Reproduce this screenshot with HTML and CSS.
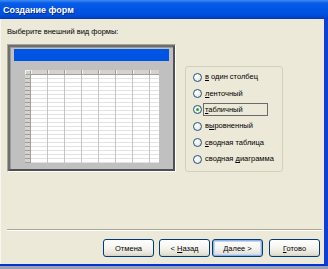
FILE: index.html
```html
<!DOCTYPE html>
<html>
<head>
<meta charset="utf-8">
<link rel="stylesheet" href="styles.css">
</head>
<body>
<div class="window">
  <div class="titlebar">Создание форм</div>
  <div class="frame">
    <div class="content">
      <div class="label">Выберите внешний вид формы:</div>
      <div class="row">
        <div class="preview">
          <div class="preview-inner">
            <div class="pbar"></div>
            <div class="grid">
              <div class="corner"></div>
              <div class="colheads"></div>
              <div class="rowheads"></div>
              <div class="cells"></div>
            </div>
          </div>
        </div>
        <div class="group">
          <div class="opt"><span class="radio"></span><span class="txt"><u>в</u> один столбец</span></div>
          <div class="opt"><span class="radio"></span><span class="txt"><u>л</u>енточный</span></div>
          <div class="opt"><span class="radio checked"></span><span class="txt focus"><u>т</u>абличный</span></div>
          <div class="opt"><span class="radio"></span><span class="txt">в<u>ы</u>ровненный</span></div>
          <div class="opt"><span class="radio"></span><span class="txt"><u>с</u>водная таблица</span></div>
          <div class="opt"><span class="radio"></span><span class="txt">сводная <u>д</u>иаграмма</span></div>
        </div>
      </div>
      <div class="sep"></div>
      <div class="buttons">
        <button class="btn">Отмена</button>
        <button class="btn b-back">&lt; <u>Н</u>азад</button>
        <button class="btn b-next"><u>Д</u>алее &gt;</button>
        <button class="btn b-done"><u>Г</u>отово</button>
      </div>
    </div>
  </div>
  <div class="bottom"></div>
</div>
</body>
</html>
```
FILE: styles.css
```css
* { box-sizing: border-box; }
html, body { margin: 0; padding: 0; }
body { width: 328px; height: 269px; overflow: hidden; background: #9aa0b4; font-family: "Liberation Sans", Arial, sans-serif; }
.window { width: 328px; height: 269px; display: flex; flex-direction: column; }
.titlebar {
  height: 19px; flex: none;
  background: linear-gradient(to bottom, #3f8cf3 0, #0a5ce6 3px, #0055e5 9px, #0052de 14px, #0044cf 17px, #003bbd 19px);
  color: #fff; font-weight: bold; font-size: 9px; line-height: 20px; padding-left: 3px;
  text-shadow: 1px 1px 0 #0a2a8a; transform-origin: left center;
}
.frame { flex: none; height: 247px; display: flex; border-right: 4px solid #0b3fd6; border-bottom: 2px solid #0234d0; }
.content { flex: 1; background: #ece9d8; border-left: 1px solid #f6f5ef; padding-left: 6px; display: flex; flex-direction: column; }
.label { font-size: 7.5px; line-height: 11px; margin-top: 7px; color: #000; height: 11px; }
.row { display: flex; margin-top: 7px; }
.preview {
  width: 169px; height: 128px; flex: none;
  border: 1px solid #a9a595; border-right-color: #fff; border-bottom-color: #fff;
  padding: 0;
}
.preview-inner {
  width: 100%; height: 100%;
  border: 2px solid #6e6e6e; border-right-color: #505050; border-bottom-color: #505050;
  background: #c0c0c0; padding: 2px 4px 0 4px;
  box-shadow: inset 1px 1px 0 #9a9a9a;
}
.pbar { height: 12px; width: 155px; background: #0054e3; }
.grid {
  margin: 9px 0 0 11px; display: grid;
  grid-template-columns: 6px 128px; grid-template-rows: 5px 88px;
}
.corner { background: #d4d0c8; border: 1px solid #f2f2f2; border-right-color: #a0a0a0; border-bottom-color: #a0a0a0; }
.colheads {
  background:
    repeating-linear-gradient(to right, #f4f4f4 0 1px, #d6d3cc 1px 16px, #9c9c9c 16px 17px);
  border-bottom: 1px solid #a0a0a0;
}
.rowheads {
  background: repeating-linear-gradient(to bottom, #d6d3cc 0 3px, #9c9c9c 3px 4px);
  border-right: 1px solid #a0a0a0;
}
.cells {
  background:
    repeating-linear-gradient(to right, transparent 0 16px, #c4c4c4 16px 17px),
    repeating-linear-gradient(to bottom, #ffffff 0 3px, #e2e2e2 3px 4px);
}
.group {
  margin-left: 9px; margin-top: 22px; width: 98px; height: 106px; flex: none;
  border: 1px solid #d0d0bf; border-radius: 3px;
  padding: 2px 0 0 7px;
}
.opt { height: 16.4px; display: flex; align-items: center; font-size: 7.5px; }
.radio {
  width: 9px; height: 9px; border-radius: 50%; flex: none;
  border: 1px solid #1d5281;
  background: radial-gradient(circle at 35% 35%, #ffffff 0, #f3f3ef 40%, #dcdad2 100%);
  position: relative; margin-right: 1px;
}
.radio.checked::after {
  content: ""; position: absolute; left: 2px; top: 2px; width: 3px; height: 3px; border-radius: 50%;
  background: #2fa82f;
}
.txt { line-height: 10px; padding: 0 1px; border: 1px solid transparent; white-space: nowrap; }
.txt.focus { border-color: #6b6b6b; width: 65px; height: 13px; line-height: 11px; }
u { text-decoration: underline; text-underline-offset: 1px; }
.sep { margin-top: 57px; margin-right: 2px; height: 2px; border-top: 1px solid #aca899; border-bottom: 1px solid #fff; }
.buttons { display: flex; justify-content: flex-end; padding-right: 4px; margin-top: 8px; }
.btn {
  width: 51px; height: 18px; padding: 0; margin: 0;
  font-family: "Liberation Sans", Arial, sans-serif; font-size: 7.5px; color: #000;
  border: 1px solid #003c74; border-radius: 3px;
  background: linear-gradient(to bottom, #ffffff 0, #f5f4ef 50%, #e6e3d8 85%, #d6d0c0 100%);
}
.b-back { margin-left: 5px; }
.b-next { margin-left: 2px; box-shadow: inset 0 0 0 1px #91b1e8, inset 0 0 0 2px #c2d5f2; }
.b-done { margin-left: 6px; }
.bottom { flex: 1; background: #9aa0b4; }
```
